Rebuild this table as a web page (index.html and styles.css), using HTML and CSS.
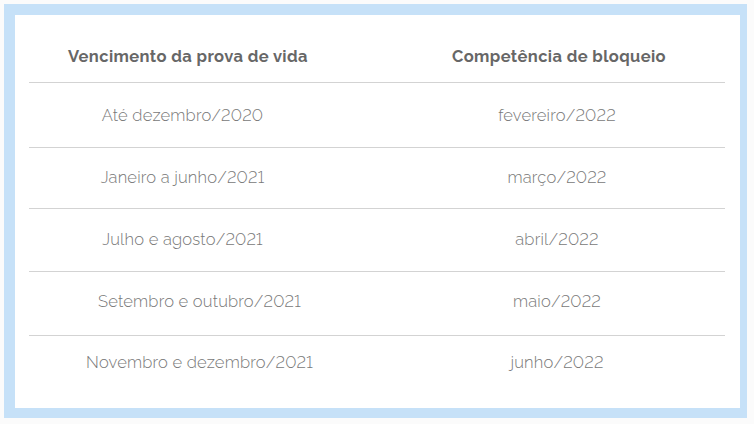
FILE: index.html
```html
<!DOCTYPE html>
<html lang="pt-BR">
<head>
<meta charset="utf-8">
<title>Prova de vida</title>
<link rel="stylesheet" href="styles.css">
</head>
<body>
<div class="page">
  <div class="frame">
    <div class="panel">
      <div class="table">
        <div class="row head">
          <div class="cell c1">Vencimento da prova de vida</div>
          <div class="cell c2">Competência de bloqueio</div>
        </div>
        <div class="row r1">
          <div class="cell c1 lean-left">Até dezembro/2020</div>
          <div class="cell c2">fevereiro/2022</div>
        </div>
        <div class="row r2">
          <div class="cell c1 lean-left">Janeiro a junho/2021</div>
          <div class="cell c2">março/2022</div>
        </div>
        <div class="row r3">
          <div class="cell c1 lean-left">Julho e agosto/2021</div>
          <div class="cell c2">abril/2022</div>
        </div>
        <div class="row r4">
          <div class="cell c1 lean-right">Setembro e outubro/2021</div>
          <div class="cell c2">maio/2022</div>
        </div>
        <div class="row r5 last">
          <div class="cell c1 lean-right">Novembro e dezembro/2021</div>
          <div class="cell c2">junho/2022</div>
        </div>
      </div>
    </div>
  </div>
</div>
</body>
</html>
```
FILE: styles.css
```css
* { box-sizing: border-box; }
html, body { margin: 0; padding: 0; background: #ffffff; }
body {
  width: 754px;
  height: 424px;
  overflow: hidden;
  font-family: "Raleway", "Lato", "Open Sans", sans-serif;
  font-variant-numeric: lining-nums;
}
.page {
  padding: 4px 7px 6px 4px;
  background: #fbfbfb;
}
.frame {
  background: #c6e1f8;
  padding: 11px 7px 10px 11px;
}
.panel {
  background: #ffffff;
  height: 393px;
  padding: 0 15px 0 14px;
}
.table {
  display: flex;
  flex-direction: column;
}
.row {
  display: grid;
  grid-template-columns: 318px 1fr;
  column-gap: 46px;
  align-items: center;
  border-bottom: 1px solid #d3d3d3;
}
.cell {
  text-align: center;
  font-size: 16.5px;
  font-weight: 300;
  color: #787878;
  letter-spacing: 0.2px;
}
.row .c2 { padding-right: 4px; }
.lean-left { padding-right: 11px; }
.lean-right { padding-left: 23px; }
.head { height: 68px; padding-top: 14px; }
.head .cell {
  font-weight: 700;
  color: #676767;
  font-size: 16.5px;
  letter-spacing: 0.4px;
}
.head .c2 { padding-right: 0; }
.r1 { height: 65px; padding-bottom: 1px; }
.r2 { height: 61px; padding-bottom: 3px; }
.r3 { height: 63px; padding-bottom: 2px; }
.r4 { height: 64px; padding-bottom: 5px; }
.last { border-bottom: none; height: 73px; padding-bottom: 22px; }
```
